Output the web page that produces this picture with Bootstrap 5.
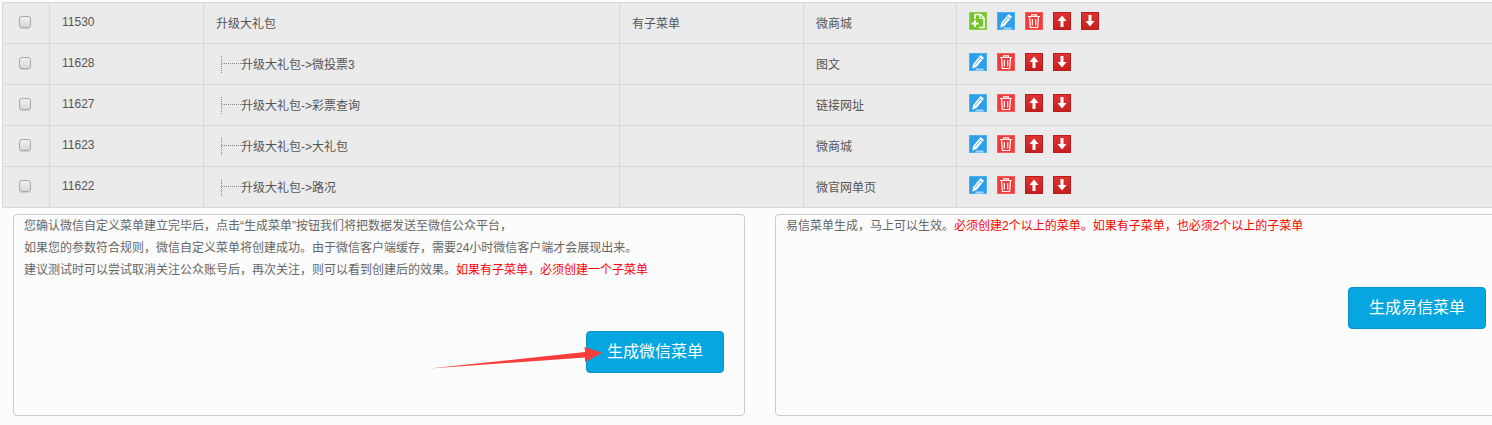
<!DOCTYPE html>
<html lang="zh">
<head>
<meta charset="utf-8">
<title>菜单</title>
<link href="https://cdn.jsdelivr.net/npm/bootstrap@5.3.0/dist/css/bootstrap.min.css" rel="stylesheet">
<style>
html,body{height:425px;overflow:hidden}
body{background:#fcfcfc;font:12px/22px "Liberation Sans","Noto Sans CJK SC",sans-serif;color:#666;position:relative}
.menu-table{table-layout:fixed;width:1500px;margin:2px 0 0 2px;border-collapse:collapse;font-size:12px}
.menu-table td{height:41px;padding:1px 12px 0;border:1px solid #d9d9d9;background:#ebebeb;color:#555;vertical-align:middle;line-height:20px}
.menu-table td.chk{padding:0 2px 3px 0;text-align:center}
.menu-table td.id-cell{padding:0 12px 2px}
.fake-check{display:inline-block;width:12px;height:12px;border:1px solid #aaa;border-radius:3px;background:linear-gradient(#f0f0f0,#d8d8d8);vertical-align:middle;box-shadow:0 1px 1px #ccc}
.tree-mark{display:inline-block;width:20px;height:17px;margin-left:5px;vertical-align:-4px;border-left:1px dotted #888;position:relative}
.tree-mark::after{content:"";position:absolute;left:0;right:0;top:7px;border-top:1px dotted #888}
.ops{display:flex;gap:10px;align-items:center;position:relative;top:-3px}
.ops svg{width:18px;height:18px;display:block}
.panels{display:flex;gap:30px;margin:6px 0 0 13px;width:1520px}
.note-box{width:732px;height:202px;flex:none;background:#fcfcfc;border:1px solid #ccc;border-radius:4px;padding:0 10px;display:flex;flex-direction:column;line-height:22px;color:#666}
.note-box p{margin:0}
.hot{color:#f00}
.make-btn{width:138px;height:42px;margin:50px 10px 0 auto;background:#06a7e1;border:1px solid #0795c9;border-radius:4px;color:#fff;font-size:16px;line-height:40px;padding:0;text-align:center}
.arrow-over{position:absolute;left:428px;top:340px;width:175px;height:32px}
</style>
</head>
<body>
<svg width="0" height="0" class="d-block position-absolute">
<defs>
<linearGradient id="g-red" x1="0" y1="0" x2="0" y2="1"><stop offset="0" stop-color="#e23232"/><stop offset="1" stop-color="#c81e1e"/></linearGradient>
<symbol id="i-add" viewBox="0 0 18 18"><rect x=".5" y=".5" width="17" height="17" fill="#74c52b" stroke="#8ad145"/><path d="M6 7V2.500h5.500L15 6v9.500H10" fill="none" stroke="#fff" stroke-width="1.600"/><path d="M11 2.500V6.500H15" fill="none" stroke="#fff" stroke-width="1.200"/><path d="M2.500 11.500h7M6 8v7" stroke="#fff" stroke-width="2"/></symbol>
<symbol id="i-edit" viewBox="0 0 18 18"><rect x=".5" y=".5" width="17" height="17" fill="#2d9fea" stroke="#4bb0f0"/><rect x="6.500" y="15.500" width="8" height="2" fill="#a5d6f6"/><path d="M3.200 15.800 4.200 11 11.500 2 15 4.800 7.700 13.800Z" fill="#fff"/><path d="M10.200 4.500 13.500 7.100M6 11.800 11 5.500" stroke="#2d9fea" stroke-width=".8"/></symbol>
<symbol id="i-del" viewBox="0 0 18 18"><rect x=".5" y=".5" width="17" height="17" fill="#f23a3a" stroke="#ff5a5a"/><path d="M3 4.500h12M6.500 4.500V2.800h5v1.700M4.500 4.500l.8 11h7.400l.8-11M7.300 7v6.500M10.700 7v6.500" fill="none" stroke="#fff" stroke-width="1.200"/></symbol>
<symbol id="i-up" viewBox="0 0 18 18"><rect x=".5" y=".5" width="17" height="17" fill="url(#g-red)" stroke="#b91c1c"/><path d="M9 3.500 13.500 9H10.500V15H7.500V9H4.500Z" fill="#fff"/></symbol>
<symbol id="i-down" viewBox="0 0 18 18"><rect x=".5" y=".5" width="17" height="17" fill="url(#g-red)" stroke="#b91c1c"/><path d="M9 14.500 13.500 9H10.500V3H7.500V9H4.500Z" fill="#fff"/></symbol>
</defs>
</svg>

<table class="table menu-table mb-0">
<colgroup><col style="width:47px"><col style="width:154px"><col style="width:416px"><col style="width:184px"><col style="width:153px"><col></colgroup>
<tbody>
<tr><td class="chk"><span class="fake-check"></span></td><td class="id-cell">11530</td><td>升级大礼包</td><td>有子菜单</td><td>微商城</td><td><div class="ops"><svg><use href="#i-add"/></svg><svg><use href="#i-edit"/></svg><svg><use href="#i-del"/></svg><svg><use href="#i-up"/></svg><svg><use href="#i-down"/></svg></div></td></tr>
<tr><td class="chk"><span class="fake-check"></span></td><td class="id-cell">11628</td><td><span class="tree-mark"></span>升级大礼包-&gt;微投票3</td><td></td><td>图文</td><td><div class="ops"><svg><use href="#i-edit"/></svg><svg><use href="#i-del"/></svg><svg><use href="#i-up"/></svg><svg><use href="#i-down"/></svg></div></td></tr>
<tr><td class="chk"><span class="fake-check"></span></td><td class="id-cell">11627</td><td><span class="tree-mark"></span>升级大礼包-&gt;彩票查询</td><td></td><td>链接网址</td><td><div class="ops"><svg><use href="#i-edit"/></svg><svg><use href="#i-del"/></svg><svg><use href="#i-up"/></svg><svg><use href="#i-down"/></svg></div></td></tr>
<tr><td class="chk"><span class="fake-check"></span></td><td class="id-cell">11623</td><td><span class="tree-mark"></span>升级大礼包-&gt;大礼包</td><td></td><td>微商城</td><td><div class="ops"><svg><use href="#i-edit"/></svg><svg><use href="#i-del"/></svg><svg><use href="#i-up"/></svg><svg><use href="#i-down"/></svg></div></td></tr>
<tr><td class="chk"><span class="fake-check"></span></td><td class="id-cell">11622</td><td><span class="tree-mark"></span>升级大礼包-&gt;路况</td><td></td><td>微官网单页</td><td><div class="ops"><svg><use href="#i-edit"/></svg><svg><use href="#i-del"/></svg><svg><use href="#i-up"/></svg><svg><use href="#i-down"/></svg></div></td></tr>
</tbody>
</table>

<div class="panels">
<div class="note-box">
<p>您确认微信自定义菜单建立完毕后，点击“生成菜单”按钮我们将把数据发送至微信公众平台，</p>
<p>如果您的参数符合规则，微信自定义菜单将创建成功。由于微信客户端缓存，需要24小时微信客户端才会展现出来。</p>
<p>建议测试时可以尝试取消关注公众账号后，再次关注，则可以看到创建后的效果。<span class="hot">如果有子菜单，必须创建一个子菜单</span></p>
<button type="button" class="btn make-btn">生成微信菜单</button>
</div>
<div class="note-box">
<p>易信菜单生成，马上可以生效。<span class="hot">必须创建2个以上的菜单。如果有子菜单，也必须2个以上的子菜单</span></p>
<button type="button" class="btn make-btn">生成易信菜单</button>
</div>
</div>

<svg class="arrow-over" viewBox="0 0 175 32"><path d="M1.500 28.500 157 12 156.500 7 174.500 12.800 157 22 157 17.500Z" fill="#f93c3c"/></svg>
<script src="https://cdn.jsdelivr.net/npm/bootstrap@5.3.0/dist/js/bootstrap.bundle.min.js"></script>
</body>
</html>
